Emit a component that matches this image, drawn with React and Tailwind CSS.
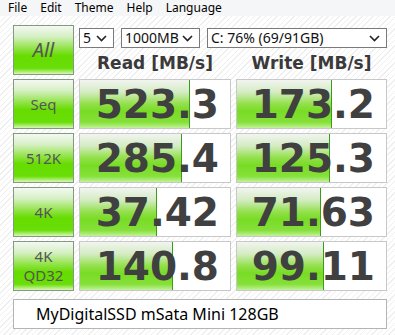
import React from "react";

const rows = [
  { label: ["Seq"], read: "523.3", readW: 110, write: "173.2", writeW: 95 },
  { label: ["512K"], read: "285.4", readW: 102, write: "125.3", writeW: 93 },
  { label: ["4K"], read: "37.42", readW: 77, write: "71.63", writeW: 84 },
  { label: ["4K", "QD32"], read: "140.8", readW: 93, write: "99.11", writeW: 87 },
];

function Chevron() {
  return (
    <svg width="11" height="7" viewBox="0 0 11 7" className="shrink-0">
      <path d="M1 1 L5.5 5.5 L10 1" fill="none" stroke="#222" strokeWidth="1.6" />
    </svg>
  );
}

function Select({ w, text }) {
  return (
    <div
      className={`${w} h-[20px] bg-white border border-[#7a7a7a] flex items-center justify-between pl-[3px] pr-[6px] text-[14px] leading-none text-[#111]`}
      style={{ fontFamily: '"Noto Sans", sans-serif' }}
    >
      <span>{text}</span>
      <Chevron />
    </div>
  );
}

function GreenButton({ children }) {
  return (
    <div
      className="w-[61px] h-[50px] border border-[#849884] bg-[linear-gradient(to_bottom,#f4f8f2_0%,#d6f0c4_22%,#96e450_45%,#66dc00_62%,#6ade08_88%,#b4f07c_96%,#d8f8b8_100%)] flex flex-col items-center justify-center text-[#555]"
      style={{ fontFamily: '"Noto Sans", sans-serif' }}
    >
      {children}
    </div>
  );
}

function Cell({ value, barW }) {
  return (
    <div className="relative h-[50px] border border-[#c8c8c8] bg-white overflow-hidden">
      <div
        className="h-full border-r border-[#3c9a1c] bg-[linear-gradient(to_bottom,#f2f4f0_0%,#d4ecc4_25%,#92e04a_50%,#78dc24_65%,#86e03a_88%,#c2f29a_100%)]"
        style={{ width: barW }}
      />
      <div
        className="absolute inset-0 flex items-center justify-end pr-[11px] text-[39px] font-bold leading-none text-[#404040]"
        style={{ fontFamily: '"DejaVu Sans", sans-serif' }}
      >
        {value}
      </div>
    </div>
  );
}

export default function App() {
  return (
    <div className="w-[395px] h-[335px] overflow-hidden bg-[repeating-linear-gradient(135deg,#ffffff_0px,#ffffff_3px,#efefef_3px,#efefef_4px)]">
      {/* menu */}
      <div
        className="h-[16px] bg-[#f5f6f7] flex items-center gap-[13px] pl-[8px] text-[12px] leading-none text-black"
        style={{ fontFamily: '"Noto Sans", sans-serif' }}
      >
        <span>File</span>
        <span>Edit</span>
        <span>Theme</span>
        <span>Help</span>
        <span>Language</span>
      </div>

      <div className="pl-[13px] pt-[9px]">
        {/* top */}
        <div className="flex gap-[5px]">
          <GreenButton>
            <span className="text-[20px] italic">All</span>
          </GreenButton>
          <div className="w-[308px]">
            <div className="flex gap-[7px] mt-[3px]">
              <Select w="w-[35px]" text="5" />
              <Select w="w-[79px]" text="1000MB" />
              <Select w="w-[180px]" text="C: 76% (69/91GB)" />
            </div>
            <div
              className="grid grid-cols-[152px_151px] gap-[5px] mt-[7px] text-[17px] font-bold leading-none text-[#3a3a3a]"
              style={{ fontFamily: '"DejaVu Sans", sans-serif' }}
            >
              <div className="text-center">Read [MB/s]</div>
              <div className="text-center">Write [MB/s]</div>
            </div>
          </div>
        </div>

        {/* rows */}
        <div className="flex flex-col gap-[4px] mt-[4px]">
          {rows.map((r, i) => (
            <div key={i} className="grid grid-cols-[61px_152px_151px] gap-[5px]">
              <GreenButton>
                {r.label.map((l) => (
                  <span key={l} className="text-[15px] leading-[19px]">
                    {l}
                  </span>
                ))}
              </GreenButton>
              <Cell value={r.read} barW={r.readW} />
              <Cell value={r.write} barW={r.writeW} />
            </div>
          ))}
        </div>

        {/* drive name */}
        <div
          className="mt-[8px] w-[374px] h-[30px] bg-white border border-[#b4b4b4] flex items-center pl-[22px] text-[16px] leading-none text-black"
          style={{ fontFamily: '"Noto Sans", sans-serif' }}
        >
          MyDigitalSSD mSata Mini 128GB
        </div>
      </div>
    </div>
  );
}
